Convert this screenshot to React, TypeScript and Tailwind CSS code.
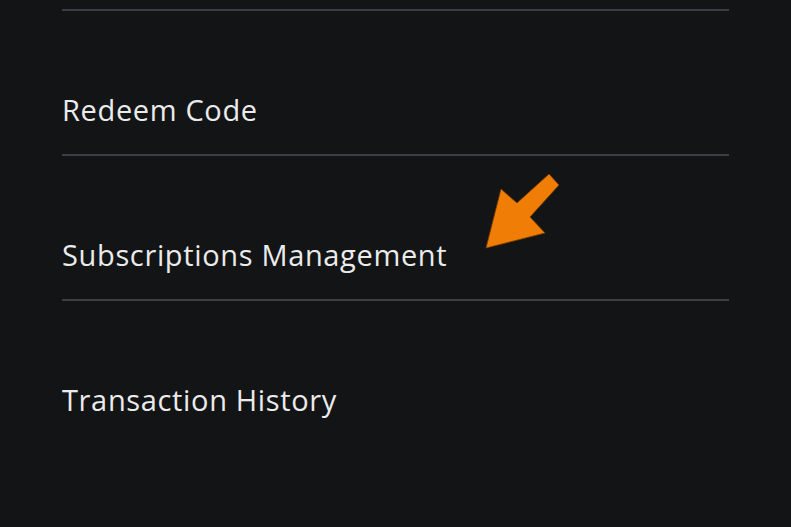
import React from "react";

const items = ["Redeem Code", "Subscriptions Management", "Transaction History"];

export default function App() {
  return (
    <div className="relative w-[791px] h-[527px] overflow-hidden bg-[#131416]" style={{ fontFamily: '"Open Sans", "Noto Sans", sans-serif' }}>
      <div className="ml-[62px] w-[667px] pt-[9px]">
        <div className="h-[2px] bg-[#3b3e42]" />
        {items.map((t, i) => (
          <div key={t} className="flex flex-col">
            <div className="h-[143px] flex items-start pt-[79px]">
              <span className="text-[29px] leading-[40px] text-[#ebebeb] tracking-[0.65px]">{t}</span>
            </div>
            {i < 2 && <div className="h-[2px] bg-[#3b3e42]" />}
          </div>
        ))}
      </div>
      <svg className="absolute left-0 top-0" width="791" height="527" viewBox="0 0 791 527">
        <polygon
          points="486,248 501,189 517,203 549,174 559,185 530,217 545,233"
          fill="#f07d05"
          stroke="#7a3c00"
          strokeWidth="0.8"
          strokeLinejoin="miter"
        />
      </svg>
    </div>
  );
}
